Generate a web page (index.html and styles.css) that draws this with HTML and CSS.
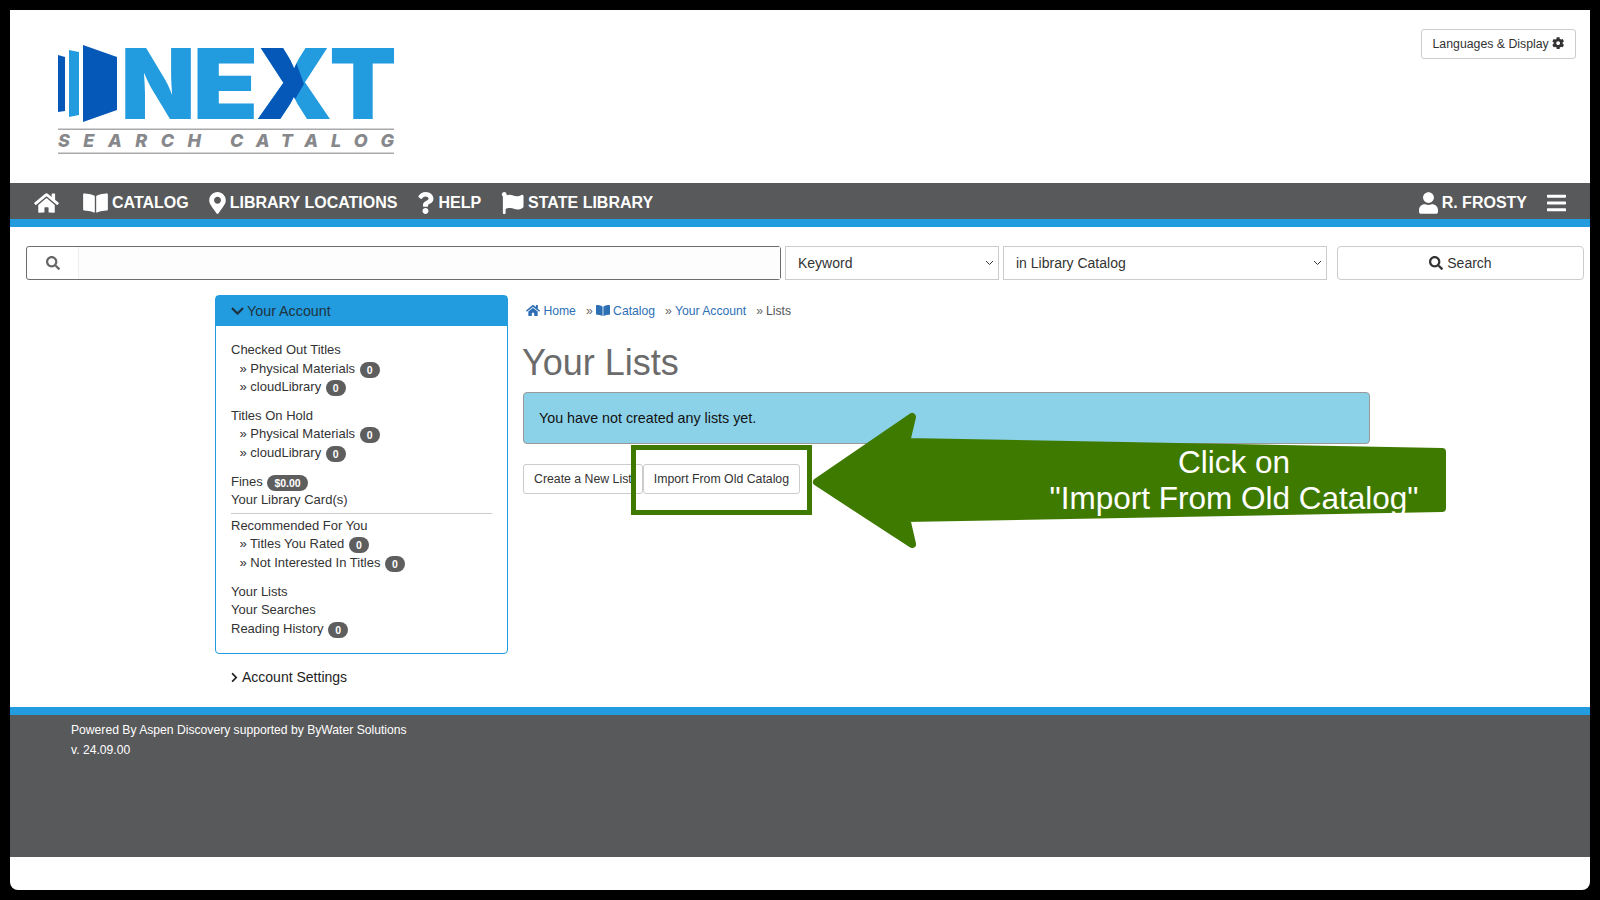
FILE: index.html
```html
<!DOCTYPE html>
<html lang="en">
<head>
    <meta charset="UTF-8">
    <title>Your Lists</title>
    <link rel="stylesheet" href="styles.css">
</head>
<body>
    <svg class="icon-defs">
        <symbol id="i-home" viewBox="0 0 576 512"><path d="M280.37 148.26L96 300.11V464a16 16 0 0 0 16 16l112.06-.29a16 16 0 0 0 15.92-16V368a16 16 0 0 1 16-16h64a16 16 0 0 1 16 16v95.64a16 16 0 0 0 16 16.05L464 480a16 16 0 0 0 16-16V300L295.67 148.26a12.19 12.19 0 0 0-15.3 0zM571.6 251.47L488 182.56V44.05a12 12 0 0 0-12-12h-56a12 12 0 0 0-12 12v72.61L318.47 43a48 48 0 0 0-61 0L4.34 251.47a12 12 0 0 0-1.6 16.9l25.5 31A12 12 0 0 0 45.15 301l235.22-193.74a12.19 12.19 0 0 1 15.3 0L530.9 301a12 12 0 0 0 16.9-1.6l25.5-31a12 12 0 0 0-1.7-16.93z"/></symbol>
        <symbol id="i-book" viewBox="0 0 576 512"><path d="M542.22 32.05c-54.8 3.11-163.72 14.43-230.96 55.59-4.64 2.84-7.27 7.89-7.27 13.17v363.87c0 11.55 12.63 18.85 23.28 13.49 69.18-34.82 169.23-44.32 218.7-46.92 16.89-.89 30.02-14.43 30.02-30.66V62.75c.01-17.71-15.35-31.74-33.77-30.7zM264.73 87.64C197.5 46.48 88.58 35.17 33.78 32.05 15.36 31.01 0 45.04 0 62.75V400.6c0 16.24 13.13 29.78 30.02 30.66 49.49 2.6 149.59 12.11 218.77 46.95 10.62 5.35 23.21-1.94 23.21-13.46V100.63c0-5.29-2.62-10.14-7.27-12.99z"/></symbol>
        <symbol id="i-marker" viewBox="0 0 384 512"><path d="M172.268 501.67C26.97 291.031 0 269.413 0 192 0 85.961 85.961 0 192 0s192 85.961 192 192c0 77.413-26.97 99.031-172.268 309.67-9.535 13.774-29.93 13.773-39.464 0zM192 272c44.183 0 80-35.817 80-80s-35.817-80-80-80-80 35.817-80 80 35.817 80 80 80z"/></symbol>
        <symbol id="i-question" viewBox="0 0 384 512"><path d="M202.021 0C122.202 0 70.503 32.703 29.914 91.026c-7.363 10.58-5.093 25.086 5.178 32.874l43.138 32.709c10.373 7.865 25.132 6.026 33.253-4.148 25.049-31.381 43.63-49.449 82.757-49.449 30.764 0 68.816 19.799 68.816 49.631 0 22.552-18.617 34.134-48.993 51.164-35.423 19.86-82.299 44.576-82.299 106.405V320c0 13.255 10.745 24 24 24h72.471c13.255 0 24-10.745 24-24v-5.773c0-42.86 125.268-44.645 125.268-160.627C377.504 66.256 286.902 0 202.021 0zM192 373.459c-38.196 0-69.271 31.075-69.271 69.271 0 38.195 31.075 69.27 69.271 69.27s69.271-31.075 69.271-69.271-31.075-69.27-69.271-69.27z"/></symbol>
        <symbol id="i-flag" viewBox="0 0 512 512"><path d="M349.565 98.783C295.978 98.783 251.721 64 184.348 64c-24.955 0-47.309 4.384-68.045 12.013a55.947 55.947 0 0 0 3.586-23.562C118.117 24.015 94.806 1.206 66.338.048 34.345-1.254 8 24.296 8 56c0 19.026 9.497 35.825 24 45.945V488c0 13.255 10.745 24 24 24h16c13.255 0 24-10.745 24-24v-94.4c28.311-12.064 63.582-22.122 114.435-22.122 53.588 0 97.844 34.783 165.217 34.783 48.169 0 86.667-16.294 122.505-40.858C506.84 359.452 512 349.571 512 339.045v-243.1c0-23.393-24.269-38.87-45.485-29.016-34.338 15.948-76.454 31.854-116.95 31.854z"/></symbol>
        <symbol id="i-user" viewBox="0 0 448 512"><path d="M224 256c70.7 0 128-57.3 128-128S294.7 0 224 0 96 57.3 96 128s57.3 128 128 128zm89.6 32h-16.7c-22.2 10.2-46.9 16-72.9 16s-50.6-5.8-72.9-16h-16.7C60.2 288 0 348.2 0 422.4V464c0 26.5 21.5 48 48 48h352c26.5 0 48-21.5 48-48v-41.6c0-74.2-60.2-134.4-134.4-134.4z"/></symbol>
        <symbol id="i-bars" viewBox="0 0 448 512"><path d="M16 132h416c8.837 0 16-7.163 16-16V76c0-8.837-7.163-16-16-16H16C7.163 60 0 67.163 0 76v40c0 8.837 7.163 16 16 16zm0 160h416c8.837 0 16-7.163 16-16v-40c0-8.837-7.163-16-16-16H16c-8.837 0-16 7.163-16 16v40c0 8.837 7.163 16 16 16zm0 160h416c8.837 0 16-7.163 16-16v-40c0-8.837-7.163-16-16-16H16c-8.837 0-16 7.163-16 16v40c0 8.837 7.163 16 16 16z"/></symbol>
        <symbol id="i-search" viewBox="0 0 512 512"><path d="M505 442.7L405.3 343c-4.5-4.5-10.6-7-17-7H372c27.6-35.3 44-79.7 44-128C416 93.1 322.9 0 208 0S0 93.1 0 208s93.1 208 208 208c48.3 0 92.7-16.4 128-44v16.3c0 6.4 2.5 12.5 7 17l99.7 99.7c9.4 9.4 24.6 9.4 33.9 0l28.3-28.3c9.4-9.4 9.4-24.6.1-34zM208 336c-70.7 0-128-57.2-128-128 0-70.7 57.2-128 128-128 70.7 0 128 57.2 128 128 0 70.7-57.2 128-128 128z"/></symbol>
        <symbol id="i-cog" viewBox="0 0 512 512"><path d="M487.4 315.7l-42.6-24.6c4.3-23.2 4.3-47 0-70.2l42.6-24.6c4.9-2.8 7.1-8.6 5.5-14-11.1-35.6-30-67.8-54.7-94.6-3.8-4.1-10-5.1-14.8-2.3L380.8 110c-17.9-15.4-38.5-27.3-60.8-35.1V25.8c0-5.6-3.9-10.5-9.4-11.7-36.7-8.2-74.3-7.8-109.2 0-5.5 1.2-9.4 6.1-9.4 11.7V75c-22.2 7.9-42.8 19.8-60.8 35.1L88.7 85.5c-4.9-2.8-11-1.9-14.8 2.3-24.7 26.7-43.6 58.9-54.7 94.6-1.7 5.4.6 11.2 5.5 14L67.3 221c-4.3 23.2-4.3 47 0 70.2l-42.6 24.6c-4.9 2.8-7.1 8.6-5.5 14 11.1 35.6 30 67.8 54.7 94.6 3.8 4.1 10 5.1 14.8 2.3l42.6-24.6c17.9 15.4 38.5 27.3 60.8 35.1v49.2c0 5.6 3.9 10.5 9.4 11.7 36.7 8.2 74.3 7.8 109.2 0 5.5-1.2 9.4-6.1 9.4-11.7v-49.2c22.2-7.9 42.8-19.8 60.8-35.1l42.6 24.6c4.9 2.8 11 1.9 14.8-2.3 24.7-26.7 43.6-58.9 54.7-94.6 1.5-5.5-.7-11.3-5.6-14.1zM256 336c-44.1 0-80-35.9-80-80s35.9-80 80-80 80 35.9 80 80-35.9 80-80 80z"/></symbol>
        <symbol id="i-down" viewBox="0 0 448 512"><path d="M207.029 381.476L12.686 187.132c-9.373-9.373-9.373-24.569 0-33.941l22.667-22.667c9.357-9.357 24.522-9.375 33.901-.04L224 284.505l154.745-154.021c9.379-9.335 24.544-9.317 33.901.04l22.667 22.667c9.373 9.373 9.373 24.569 0 33.941L240.971 381.476c-9.373 9.372-24.569 9.372-33.942 0z"/></symbol>
        <symbol id="i-right" viewBox="0 0 320 512"><path d="M285.476 272.971L91.132 467.314c-9.373 9.373-24.569 9.373-33.941 0l-22.667-22.667c-9.357-9.357-9.375-24.522-.04-33.901L188.505 256 34.484 101.255c-9.335-9.379-9.317-24.544.04-33.901l22.667-22.667c9.373-9.373 24.569-9.373 33.941 0L285.475 239.03c9.373 9.372 9.373 24.568.001 33.941z"/></symbol>
    </svg>

    <div class="page">
        <header class="top">
            <svg class="logo" viewBox="58 44 337 112" width="337" height="112">
                <defs>
                    <clipPath id="x-left"><polygon points="250,40 288,40 304,84 280,125 250,125"/></clipPath>
                </defs>
                <polygon class="logo-dark" points="58,55 65,57 65,111 58,112"/>
                <polygon class="logo-light" points="69,50 79,52 79,115 69,117"/>
                <polygon class="logo-dark" points="83,45 117,57 117,110 83,122"/>
                <text class="logo-next" x="120.7" y="119" textLength="74.6" lengthAdjust="spacingAndGlyphs">N</text>
                <text class="logo-next" x="192.4" y="119" textLength="66" lengthAdjust="spacingAndGlyphs">E</text>
                <text class="logo-next" x="255.8" y="119" textLength="76.4" lengthAdjust="spacingAndGlyphs">X</text>
                <text class="logo-next logo-x" x="255.8" y="119" textLength="76.4" lengthAdjust="spacingAndGlyphs" clip-path="url(#x-left)">X</text>
                <text class="logo-next" x="329.2" y="119" textLength="67.5" lengthAdjust="spacingAndGlyphs">T</text>
                <rect class="logo-line" x="58" y="128.5" width="336" height="1.5"/>
                <text class="logo-sub" x="58" y="147" textLength="143">SEARCH</text>
                <text class="logo-sub" x="230" y="147" textLength="164">CATALOG</text>
                <rect class="logo-line" x="58" y="152.5" width="336" height="1.5"/>
            </svg>
            <button class="btn lang-btn" type="button">Languages &amp; Display <svg class="ico cog"><use href="#i-cog"/></svg></button>
        </header>

        <nav class="menu">
            <a class="menu-item first"><svg class="ico"><use href="#i-home"/></svg></a>
            <a class="menu-item book"><svg class="ico"><use href="#i-book"/></svg>Catalog</a>
            <a class="menu-item"><svg class="ico marker"><use href="#i-marker"/></svg>Library Locations</a>
            <a class="menu-item"><svg class="ico marker"><use href="#i-question"/></svg>Help</a>
            <a class="menu-item"><svg class="ico flag"><use href="#i-flag"/></svg>State Library</a>
            <span class="spacer"></span>
            <a class="menu-item"><svg class="ico user"><use href="#i-user"/></svg>R. Frosty</a>
            <a class="menu-item"><svg class="ico user"><use href="#i-bars"/></svg></a>
        </nav>

        <form class="searchbar">
            <div class="search-group">
                <span class="search-addon"><svg class="ico"><use href="#i-search"/></svg></span>
                <input class="search-input" type="text">
            </div>
            <select class="search-select type"><option>Keyword</option></select>
            <select class="search-select scope"><option>in Library Catalog</option></select>
            <button class="btn search-btn" type="button"><svg class="ico"><use href="#i-search"/></svg> Search</button>
        </form>

        <div class="content">
            <aside class="side">
                <div class="panel">
                    <div class="panel-head"><svg class="ico"><use href="#i-down"/></svg>Your Account</div>
                    <div class="panel-body">
                        <div class="group">
                            <div class="row">Checked Out Titles</div>
                            <div class="row sub">» Physical Materials <span class="badge">0</span></div>
                            <div class="row sub">» cloudLibrary <span class="badge">0</span></div>
                        </div>
                        <div class="group">
                            <div class="row">Titles On Hold</div>
                            <div class="row sub">» Physical Materials <span class="badge">0</span></div>
                            <div class="row sub">» cloudLibrary <span class="badge">0</span></div>
                        </div>
                        <div class="group">
                            <div class="row">Fines <span class="badge">$0.00</span></div>
                            <div class="row">Your Library Card(s)</div>
                        </div>
                        <hr class="rule">
                        <div class="group">
                            <div class="row">Recommended For You</div>
                            <div class="row sub">» Titles You Rated <span class="badge">0</span></div>
                            <div class="row sub">» Not Interested In Titles <span class="badge">0</span></div>
                        </div>
                        <div class="group">
                            <div class="row">Your Lists</div>
                            <div class="row">Your Searches</div>
                            <div class="row">Reading History <span class="badge">0</span></div>
                        </div>
                    </div>
                </div>
                <div class="settings"><svg class="ico"><use href="#i-right"/></svg>Account Settings</div>
            </aside>

            <main class="main">
                <div class="crumbs">
                    <a><svg class="ico"><use href="#i-home"/></svg> Home</a>
                    <span class="sep">»</span>
                    <a><svg class="ico"><use href="#i-book"/></svg> Catalog</a>
                    <span class="sep">»</span>
                    <a>Your Account</a>
                    <span class="sep">»</span>
                    <span>Lists</span>
                </div>
                <h1 class="title">Your Lists</h1>
                <div class="alert">You have not created any lists yet.</div>
                <div class="actions">
                    <button class="btn" type="button">Create a New List</button>
                    <button class="btn" type="button">Import From Old Catalog</button>
                </div>
            </main>
        </div>

        <footer class="foot">
            <div>Powered By Aspen Discovery supported by ByWater Solutions</div>
            <div>v. 24.09.00</div>
        </footer>

        <!-- annotation drawn over the page -->
        <div class="callout-box"></div>
        <svg class="callout-arrow" viewBox="0 0 1600 900" width="1600" height="900">
            <polygon points="817,482 912,417 906,442 1442,452 1442,508 906,518 912,544"/>
        </svg>
        <div class="callout-text">Click on<br>"Import From Old Catalog"</div>
    </div>
</body>
</html>
```

FILE: styles.css
```css
* {
    box-sizing: border-box;
}

body {
    margin: 0;
    padding: 10px;
    background-color: #000;
    font-family: "Liberation Sans", Arial, sans-serif;
    font-size: 14px;
    color: #333;
}

.icon-defs {
    display: none;
}

.ico {
    width: 1em;
    height: 1em;
    fill: currentColor;
    vertical-align: -0.125em;
}

.page {
    position: relative;
    width: 1580px;
    height: 880px;
    background-color: #fff;
    border-radius: 0 0 8px 8px;
    overflow: hidden;
}

/* header */
.top {
    display: flex;
    justify-content: space-between;
    align-items: flex-start;
    height: 173px;
    padding: 19px 14px 0 48px;
}

.logo {
    margin-top: 15px;
    overflow: visible;
}

.logo-dark {
    fill: #0558b8;
}

.logo-light,
.logo-next {
    fill: #229bdf;
}

.logo-next {
    font-family: Inter, "Liberation Sans", sans-serif;
    font-weight: 900;
    font-size: 98px;
}

.logo-next.logo-x {
    fill: #0558b8;
}

.logo-line {
    fill: #a9a9ab;
}

.logo-sub {
    font-family: Inter, "Liberation Sans", sans-serif;
    font-weight: 800;
    font-style: italic;
    font-size: 18px;
    fill: #87888b;
}

.btn {
    height: 30px;
    padding: 0 10px;
    background-color: #fff;
    border: 1px solid #ccc;
    border-radius: 3px;
    font-family: inherit;
    font-size: 12.3px;
    color: #333;
}

.lang-btn {
    width: 155px;
    white-space: nowrap;
}

/* main menu */
.menu {
    display: flex;
    align-items: center;
    gap: 20px;
    height: 44px;
    padding: 3px 24px 0;
    background-color: #58595b;
    border-bottom: 8px solid #229bdf;
    color: #fff;
    font-weight: bold;
    font-size: 16px;
    text-transform: uppercase;
}

.menu-item {
    display: flex;
    align-items: center;
    gap: 4px;
    white-space: nowrap;
}

.menu-item .ico {
    width: 25px;
    height: 22px;
}

.menu-item .marker {
    width: 17px;
}

.menu-item .flag {
    width: 23px;
}

.menu-item .user {
    width: 19px;
}

.menu-item.book {
    margin-left: 4px;
}

.spacer {
    flex: 1;
}

/* search */
.searchbar {
    display: flex;
    height: 34px;
    margin: 19px 6px 0 16px;
    gap: 4px;
}

.search-group {
    display: flex;
    width: 755px;
    border: 1px solid #6d6d6d;
    border-radius: 3px;
}

.search-addon {
    width: 52px;
    display: flex;
    align-items: center;
    justify-content: center;
    border-right: 1px solid #eee;
    color: #666;
    font-size: 14px;
}

.search-input {
    flex: 1;
    border: 0;
    outline: 0;
    background-color: #fdfdfd;
}

.search-select {
    appearance: none;
    height: 34px;
    padding: 0 8px 0 12px;
    background: #fff url("data:image/svg+xml,%3Csvg xmlns='http://www.w3.org/2000/svg' width='9' height='6'%3E%3Cpath d='M1 1l3.5 3.5L8 1' fill='none' stroke='%23333' stroke-width='1'/%3E%3C/svg%3E") no-repeat right 4px center;
    border: 1px solid #ccc;
    font-family: inherit;
    font-size: 14px;
    color: #333;
}

.search-select.type {
    width: 214px;
}

.search-select.scope {
    width: 324px;
}

.search-btn {
    width: 247px;
    height: 34px;
    margin-left: 6px;
    font-size: 14px;
    border-radius: 4px;
}

/* page body */
.content {
    display: flex;
    gap: 15px;
    height: 427px;
    padding: 15px 0 0 205px;
}

.side {
    width: 293px;
}

.panel {
    border: 1px solid #229bdf;
    border-radius: 4px;
}

.panel-head {
    display: flex;
    align-items: center;
    gap: 3px;
    height: 30px;
    padding-left: 15px;
    background-color: #229bdf;
    color: #1f3340;
    font-size: 14.3px;
}

.panel-head .ico {
    width: 13px;
}

.panel-body {
    padding: 15px 15px 5px;
    font-size: 13px;
}

.group {
    margin-bottom: 10px;
}

.row {
    height: 18.6px;
    line-height: 18.6px;
    white-space: nowrap;
}

.row.sub {
    padding-left: 8.5px;
}

.badge {
    display: inline-block;
    min-width: 20px;
    height: 16px;
    margin-left: 1px;
    padding: 0 7px;
    border-radius: 10px;
    background-color: #5e5e5e;
    color: #fff;
    font-size: 10.5px;
    font-weight: bold;
    line-height: 16px;
    text-align: center;
    vertical-align: -1px;
}

.rule {
    height: 1px;
    margin: -7px 0 3px;
    background-color: #ccc;
    border: 0;
}

.settings {
    display: flex;
    align-items: center;
    gap: 4px;
    margin-top: 15px;
    padding-left: 16px;
    color: #222;
}

.settings .ico {
    width: 7px;
    height: 11px;
}

.main {
    width: 847px;
}

.crumbs {
    display: flex;
    align-items: center;
    height: 32px;
    padding-left: 3px;
    font-size: 12.2px;
    color: #555;
}

.crumbs a {
    color: #2d6fb5;
    white-space: nowrap;
}

.crumbs .ico {
    width: 14px;
    height: 13px;
}

.crumbs .sep {
    margin: 0 3px 0 10px;
    color: #666;
}

.title {
    margin: 16px 0 9px -1px;
    font-size: 36px;
    font-weight: normal;
    line-height: 40px;
    color: #6b6b6b;
}

.alert {
    height: 52px;
    padding: 0 15px;
    background-color: #8bd2e8;
    border: 1px solid #999;
    border-radius: 4px;
    color: #111;
    font-size: 14.3px;
    line-height: 50px;
}

.actions {
    display: flex;
    margin-top: 20px;
}

.foot {
    height: 150px;
    padding: 5px 61px;
    background-color: #58595b;
    border-top: 8px solid #229bdf;
    color: #fff;
    font-size: 12.15px;
    line-height: 20px;
}

/* annotation */
.callout-box {
    position: absolute;
    left: 621px;
    top: 435px;
    width: 181px;
    height: 70px;
    border: 5px solid #3f7a00;
}

.callout-arrow {
    position: absolute;
    left: -10px;
    top: -10px;
    fill: #3f7a00;
    stroke: #3f7a00;
    stroke-width: 8px;
    stroke-linejoin: round;
    pointer-events: none;
}

.callout-text {
    position: absolute;
    left: 1024px;
    top: 434px;
    width: 400px;
    color: #fff;
    font-size: 31.5px;
    line-height: 36px;
    text-align: center;
}
```
